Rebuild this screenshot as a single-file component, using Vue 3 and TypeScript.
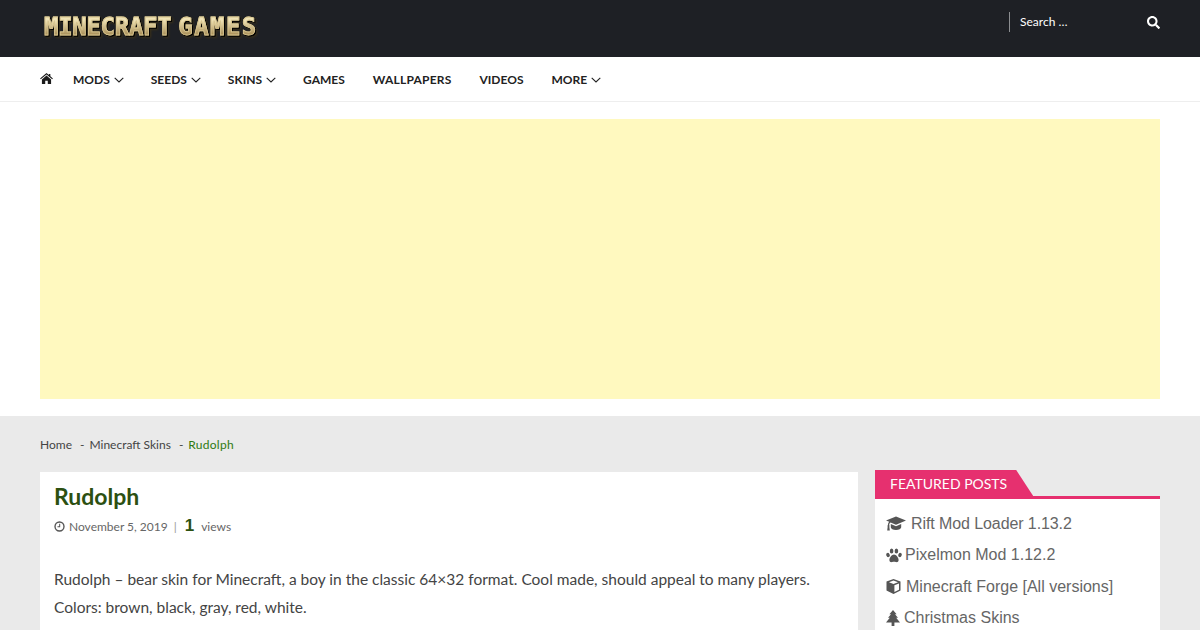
<script setup lang="ts">
const navItems = [
  { label: 'MODS', caret: true },
  { label: 'SEEDS', caret: true },
  { label: 'SKINS', caret: true },
  { label: 'GAMES', caret: false, wide: true },
  { label: 'WALLPAPERS', caret: false, wide: true },
  { label: 'VIDEOS', caret: false, wide: true },
  { label: 'MORE', caret: true },
]
</script>

<template>
  <div class="page">
    <header class="top">
      <div class="logo"><span class="word-a">MINECRAFT</span><span class="word-b">GAMES</span></div>
      <div class="search">
        <span class="search-text">Search …</span>
        <svg class="search-icon" viewBox="0 0 512 512">
          <path fill="#fff" d="M505 442.7L405.3 343c-4.5-4.5-10.6-7-17-7H372c27.6-35.3 44-79.7 44-128C416 93.1 322.9 0 208 0S0 93.1 0 208s93.1 208 208 208c48.3 0 92.7-16.4 128-44v16.3c0 6.4 2.5 12.5 7 17l99.7 99.7c9.4 9.4 24.6 9.4 33.9 0l28.3-28.3c9.4-9.4 9.4-24.6.1-34zM208 336c-70.7 0-128-57.2-128-128 0-70.7 57.2-128 128-128 70.7 0 128 57.2 128 128 0 70.7-57.2 128-128 128z" />
        </svg>
      </div>
    </header>

    <nav class="nav">
      <svg class="home" viewBox="0 0 14 12">
        <path fill="#1b1b1b" d="M7 0 L9.6 2.2 V1 H11.2 V3.6 L14 6 L13.2 6.9 L7 1.7 L.8 6.9 L0 6 Z M7 2.8 L12 7 V12 H8.4 V8.4 H5.6 V12 H2 V7 Z" />
      </svg>
      <a v-for="item in navItems" :key="item.label" :class="['nav-item', { wide: item.wide }]">
        {{ item.label }}
        <svg v-if="item.caret" class="caret" viewBox="0 0 10 6">
          <path d="M.7 .8 L5 5 L9.3 .8" fill="none" stroke="#222" stroke-width="1.1" />
        </svg>
      </a>
    </nav>

    <section class="ad-wrap">
      <div class="ad"></div>
    </section>

    <main class="content">
      <div class="crumbs">
        <span>Home</span><span class="sep">-</span><span>Minecraft Skins</span><span class="sep">-</span><span class="current">Rudolph</span>
      </div>
      <div class="columns">
        <article class="post">
          <h1>Rudolph</h1>
          <div class="meta">
            <svg class="clock" viewBox="0 0 12 12">
              <circle cx="6" cy="6" r="4.9" fill="none" stroke="#555" stroke-width="1.5" />
              <path d="M6.2 3 V6.4 H3.8" fill="none" stroke="#555" stroke-width="1.1" />
            </svg>
            <span class="date">November 5, 2019</span>
            <span class="pipe">|</span>
            <span class="count">1</span>
            <span class="views">views</span>
          </div>
          <p>Rudolph – bear skin for Minecraft, a boy in the classic 64×32 format. Cool made, should appeal to many players. Colors: brown, black, gray, red, white.</p>
        </article>

        <aside class="side">
          <div class="side-head">
            <span class="side-title">FEATURED POSTS</span>
          </div>
          <ul class="side-list">
            <li>
              <svg class="ic cap" viewBox="0 0 20 15">
                <path fill="#555" d="M10 .5 L20 4.6 L10 8.8 L4.6 6.5 C3.6 7 3.3 8 3.2 9.2 C3.7 9.5 3.7 10.2 3.3 10.5 L3.8 14.5 H1.2 L1.7 10.5 C1.3 10.2 1.3 9.5 1.9 9.2 C2 7.9 2.3 6.6 3.2 5.8 L0 4.6 Z M4.8 8 L10 10.2 L15.2 8 V11.2 C15.2 12.8 12.8 14 10 14 C7.2 14 4.8 12.8 4.8 11.2 Z" />
              </svg>
              <span class="tight">Rift Mod Loader 1.13.2</span>
            </li>
            <li>
              <svg class="ic paw" viewBox="0 0 16 15">
                <g fill="#555">
                  <ellipse cx="5.6" cy="3" rx="1.8" ry="2.5" />
                  <ellipse cx="10.4" cy="3" rx="1.8" ry="2.5" />
                  <ellipse cx="2" cy="7" rx="1.7" ry="2.2" transform="rotate(-18 2 7)" />
                  <ellipse cx="14" cy="7" rx="1.7" ry="2.2" transform="rotate(18 14 7)" />
                  <path d="M8 6.6 C10 6.6 12.6 9.6 12.6 12 C12.6 14 11 14.4 9.8 14 C8.7 13.6 7.3 13.6 6.2 14 C5 14.4 3.4 14 3.4 12 C3.4 9.6 6 6.6 8 6.6 Z" />
                </g>
              </svg>
              <span>Pixelmon Mod 1.12.2</span>
            </li>
            <li>
              <svg class="ic cube" viewBox="0 0 15 15">
                <path fill="#555" d="M7.5 0 L14.5 2.6 V11.6 L7.5 15 L.5 11.6 V2.6 Z M7.5 1.5 L3 3.2 L7.5 5 L12 3.2 Z M8.4 6.3 V13 L13 10.8 V4.5 Z" />
              </svg>
              <span>Minecraft Forge [All versions]</span>
            </li>
            <li>
              <svg class="ic tree" viewBox="0 0 14 16">
                <path fill="#555" d="M7 0 L10.6 4.2 H9 L12 7.8 H10.2 L14 12.4 H8.4 V16 H5.6 V12.4 H0 L3.8 7.8 H2 L5 4.2 H3.4 Z" />
              </svg>
              <span>Christmas Skins</span>
            </li>
          </ul>
        </aside>
      </div>
    </main>
  </div>
</template>

<style>
html,
body {
  margin: 0;
  overflow: hidden;
}
</style>

<style scoped>
.page {
  width: 1200px;
  height: 630px;
  overflow: hidden;
  font-family: Lato, "Liberation Sans", sans-serif;
  background: #eaeaea;
}

.top {
  height: 57px;
  box-sizing: border-box;
  padding: 0 40px 0 44px;
  background: #1e2025;
  display: flex;
  justify-content: space-between;
  align-items: flex-start;
}

.logo {
  margin-top: 13px;
  display: flex;
  gap: 7px;
  font-family: "DejaVu Sans Mono", monospace;
  font-weight: 700;
  font-size: 24px;
  line-height: 28px;
  white-space: nowrap;
  background: linear-gradient(#f0e3b6 25%, #a98f58 78%);
  -webkit-background-clip: text;
  background-clip: text;
  color: transparent;
  -webkit-text-stroke: 0.8px #d9c68f;
  filter: drop-shadow(1px 1px 0 #000) drop-shadow(1px 1px 1px #3a3018);
}

.word-a {
  letter-spacing: -0.3px;
}

.word-b {
  letter-spacing: 1.4px;
}

.search {
  margin-top: 12px;
  width: 151px;
  height: 20px;
  box-sizing: border-box;
  border-left: 1px solid #8b8d90;
  padding: 0 0 0 10px;
  display: flex;
  justify-content: space-between;
  align-items: center;
}

.search-text {
  margin-top: -2px;
  font-size: 12px;
  color: #fff;
}

.search-icon {
  width: 13px;
  height: 13px;
}

.nav {
  height: 45px;
  box-sizing: border-box;
  padding: 0 0 0 40px;
  background: #fff;
  border-bottom: 1px solid #eee;
  display: flex;
  align-items: center;
}

.home {
  width: 13px;
  height: 11px;
  margin: -2px 20px 0 0;
}

.nav-item {
  display: flex;
  align-items: center;
  gap: 4px;
  margin-right: 27px;
  font-size: 12px;
  font-weight: 700;
  color: #222;
}

.nav-item.wide {
  margin-right: 28px;
}

.nav-item.wide:nth-of-type(5) {
  letter-spacing: 0.2px;
}

.caret {
  width: 10px;
  height: 6px;
  margin-top: 1px;
}

.ad-wrap {
  height: 314px;
  box-sizing: border-box;
  padding: 17px 40px;
  background: #fff;
}

.ad {
  height: 280px;
  background: #fff9bf;
}

.content {
  padding: 20px 40px 0;
}

.crumbs {
  display: flex;
  height: 16px;
  align-items: center;
  font-size: 12px;
  color: #444;
}

.sep {
  margin: 0 5px 0 8px;
}

.current {
  color: #2f7a10;
  letter-spacing: 0.25px;
}

.columns {
  margin-top: 18px;
  display: grid;
  grid-template-columns: 818px 285px;
  column-gap: 17px;
  align-items: start;
}

.post {
  background: #fff;
  height: 200px;
  padding: 0 14px;
  margin-top: 2px;
}

h1 {
  margin: 0;
  padding-top: 9px;
  font-size: 23px;
  line-height: 30px;
  font-weight: 700;
  color: #2c5011;
}

.meta {
  display: flex;
  align-items: center;
  height: 20px;
  margin-top: 5px;
  font-size: 12px;
  color: #666;
}

.clock {
  width: 11px;
  height: 11px;
  margin-right: 4px;
}

.pipe {
  margin: 0 8px 0 6px;
  color: #999;
}

.count {
  font-family: "Liberation Sans", sans-serif;
  font-size: 17px;
  font-weight: 700;
  color: #2c5011;
  margin-right: 7px;
}

.post p {
  margin: 29px 0 0;
  font-size: 15.5px;
  line-height: 28px;
  color: #444;
}

.side {
  background: #fff;
}

.side-head {
  height: 26px;
  background: #eaeaea;
  border-bottom: 3px solid #e6306f;
}

.side-title {
  display: inline-block;
  height: 26px;
  padding: 0 26px 0 15px;
  background: #e6306f;
  clip-path: polygon(0 0, calc(100% - 17px) 0, 100% 100%, 0 100%);
  font-size: 14px;
  line-height: 27px;
  color: #fff;
}

.side-list {
  list-style: none;
  margin: 0;
  padding: 9px 11px 0;
  font-family: "Liberation Sans", Arial, sans-serif;
  font-size: 16px;
  color: #666;
}

.side-list li {
  display: flex;
  align-items: center;
  height: 31.5px;
}

.tight {
  letter-spacing: -0.09px;
}

.ic {
  flex: none;
  margin-right: 4px;
}

.cap {
  width: 20px;
  height: 15px;
  margin-right: 5px;
}

.paw {
  width: 16px;
  height: 15px;
  margin-right: 3px;
}

.cube {
  width: 15px;
  height: 15px;
  margin-right: 5px;
}

.tree {
  width: 14px;
  height: 16px;
}
</style>
